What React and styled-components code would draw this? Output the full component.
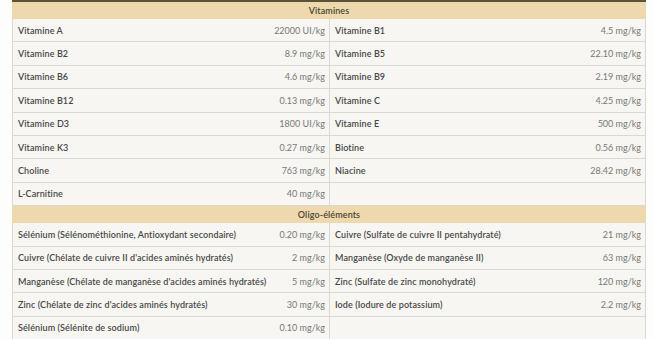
import React from 'react';
import styled, { createGlobalStyle } from 'styled-components';

const vitamines = [
  ['Vitamine A', '22000 UI/kg'],
  ['Vitamine B1', '4.5 mg/kg'],
  ['Vitamine B2', '8.9 mg/kg'],
  ['Vitamine B5', '22.10 mg/kg'],
  ['Vitamine B6', '4.6 mg/kg'],
  ['Vitamine B9', '2.19 mg/kg'],
  ['Vitamine B12', '0.13 mg/kg'],
  ['Vitamine C', '4.25 mg/kg'],
  ['Vitamine D3', '1800 UI/kg'],
  ['Vitamine E', '500 mg/kg'],
  ['Vitamine K3', '0.27 mg/kg'],
  ['Biotine', '0.56 mg/kg'],
  ['Choline', '763 mg/kg'],
  ['Niacine', '28.42 mg/kg'],
  ['L-Carnitine', '40 mg/kg'],
];

const oligo = [
  ['Sélénium (Sélénométhionine, Antioxydant secondaire)', '0.20 mg/kg'],
  ['Cuivre (Sulfate de cuivre II pentahydraté)', '21 mg/kg'],
  ["Cuivre (Chélate de cuivre II d'acides aminés hydratés)", '2 mg/kg'],
  ['Manganèse (Oxyde de manganèse II)', '63 mg/kg'],
  ["Manganèse (Chélate de manganèse d'acides aminés hydratés)", '5 mg/kg'],
  ['Zinc (Sulfate de zinc monohydraté)', '120 mg/kg'],
  ["Zinc (Chélate de zinc d'acides aminés hydratés)", '30 mg/kg'],
  ['Iode (Iodure de potassium)', '2.2 mg/kg'],
  ['Sélénium (Sélénite de sodium)', '0.10 mg/kg'],
];

const sections = [
  { title: 'Vitamines', items: vitamines },
  { title: 'Oligo-éléments', items: oligo },
];

const App = () => {
  return (
    <>
      <GlobalStyle />
      <Table>
        {sections.map(section => {
          const items = [...section.items];
          if (items.length % 2) items.push(null);
          return (
            <React.Fragment key={section.title}>
              <SectionTitle>{section.title}</SectionTitle>
              {items.map((item, i) => (
                <Cell key={i} right={i % 2 === 1}>
                  {item && (
                    <>
                      <Name>{item[0]}</Name>
                      <Value>{item[1]}</Value>
                    </>
                  )}
                </Cell>
              ))}
            </React.Fragment>
          );
        })}
      </Table>
    </>
  );
};

const GlobalStyle = createGlobalStyle`
  body {
    margin: 0;
    background: #fdfdfc;
    font-family: Lato, "Open Sans", sans-serif;
  }
`;

const Table = styled.div`
  display: grid;
  grid-template-columns: 317px 317px;
  width: 634px;
  margin-left: 12px;
  border-top: 2px solid #5c5238;
`;

const SectionTitle = styled.div`
  grid-column: 1 / -1;
  height: 17px;
  display: flex;
  align-items: center;
  justify-content: center;
  background: #eed9ae;
  color: #4d4535;
  font-size: 9px;
  font-weight: 600;
  letter-spacing: 0.1px;
`;

const Cell = styled.div`
  box-sizing: border-box;
  height: 23.4px;
  display: flex;
  align-items: center;
  justify-content: space-between;
  padding: 0 4px 0 5px;
  background: #f7f6f2;
  border-bottom: 1px solid #dcd8cf;
  border-left: 1px solid #dcd8cf;
  border-right: ${props => (props.right ? '1px solid #dcd8cf' : 'none')};
  font-size: 9px;
`;

const Name = styled.span`
  color: #484848;
  font-weight: 600;
  letter-spacing: 0.1px;
  white-space: nowrap;
`;

const Value = styled.span`
  color: #787878;
  white-space: nowrap;
`;

export default App;
